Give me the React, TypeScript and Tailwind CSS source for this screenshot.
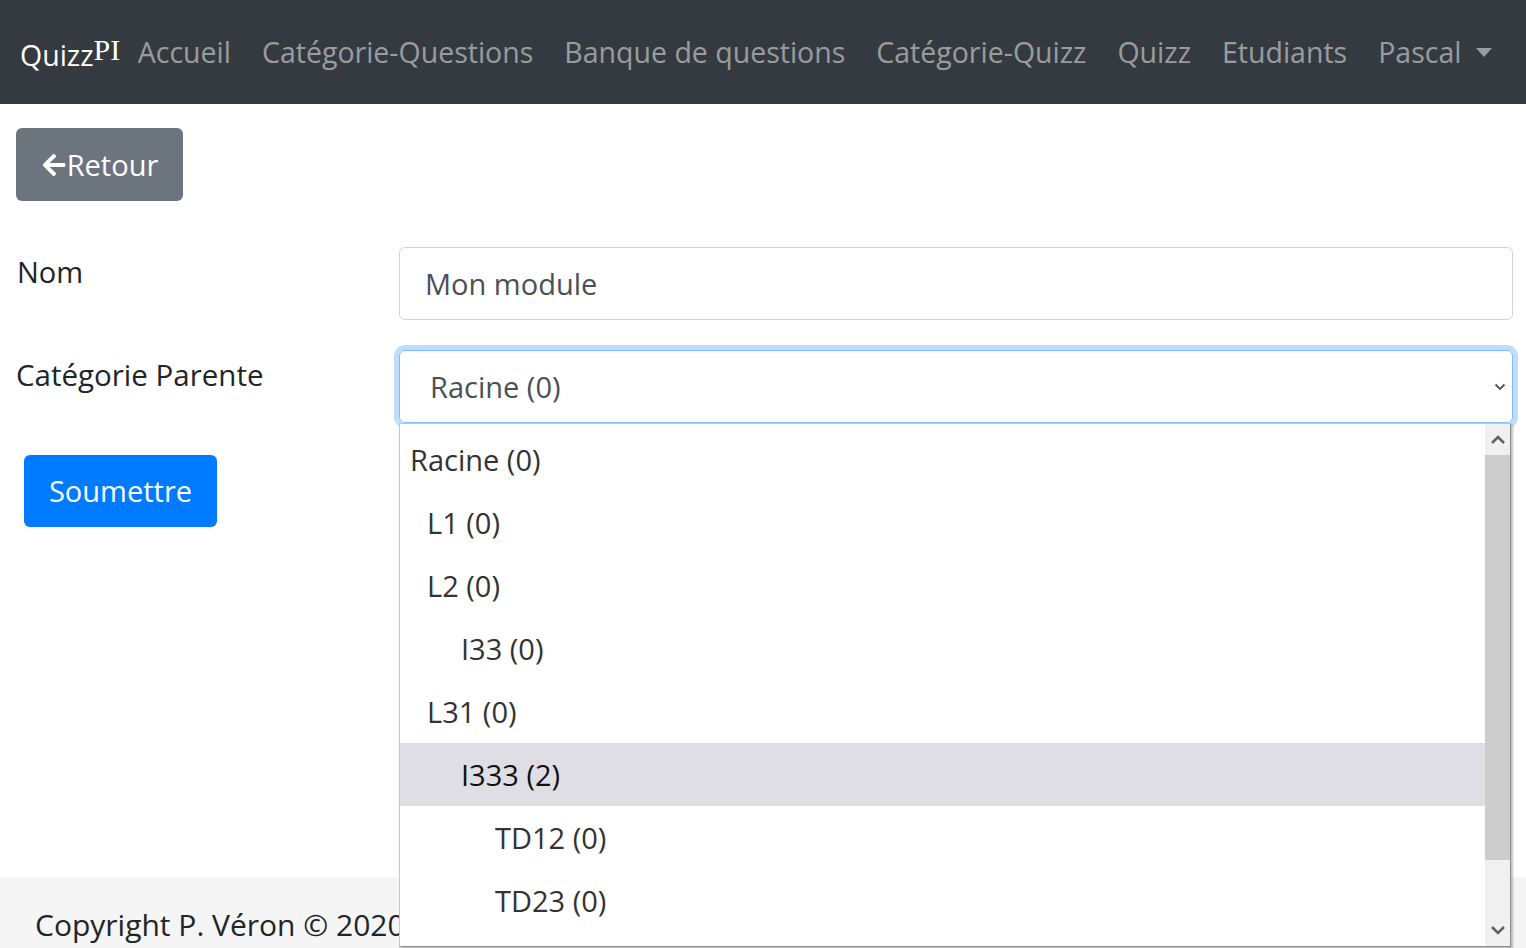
import { FaArrowLeft } from "react-icons/fa";

const navLinks = [
  "Accueil",
  "Catégorie-Questions",
  "Banque de questions",
  "Catégorie-Quizz",
  "Quizz",
  "Etudiants",
];

const options = [
  { label: "Racine (0)", indent: "pl-[10px]" },
  { label: "L1 (0)", indent: "pl-[27px]" },
  { label: "L2 (0)", indent: "pl-[27px]" },
  { label: "I33 (0)", indent: "pl-[61px]" },
  { label: "L31 (0)", indent: "pl-[27px]" },
  { label: "I333 (2)", indent: "pl-[61px]", active: true },
  { label: "TD12 (0)", indent: "pl-[95px]" },
  { label: "TD23 (0)", indent: "pl-[95px]" },
];

const Navbar = () => (
  <nav className="flex h-[104px] shrink-0 items-center whitespace-nowrap bg-[#343a40] px-[20px]">
    <a className="mr-[2px] flex shrink-0 items-start text-[28.5px] leading-none text-white">
      <span className="pt-[6px]">Quizz</span>
      <span className="font-['Liberation_Serif',serif] text-[30px] leading-none">PI</span>
    </a>
    <div className="flex shrink-0 items-center">
      {navLinks.map((link) => (
        <a key={link} className="shrink-0 px-[15.5px] text-[28.5px] text-white/50">
          {link}
        </a>
      ))}
      <a className="flex shrink-0 items-center gap-[15px] px-[15.5px] text-[28.5px] text-white/50">
        Pascal
        <span className="h-0 w-0 border-x-[8px] border-t-[9px] border-x-transparent border-t-white/50" />
      </a>
    </div>
  </nav>
);

const Dropdown = () => (
  <div className="absolute left-0 top-[73px] z-10 flex h-[524px] w-[1112px] border border-[#c5c5cb] border-r-[#8f8f94] border-b-[#8f8f94] bg-white shadow-[2px_2px_2px_rgba(0,0,0,0.25)]">
    <div className="flex-1 pt-[4px]">
      {options.map((o) => (
        <div
          key={o.label}
          className={`flex h-[63px] items-center text-[29px] ${o.indent} ${
            o.active ? "bg-[#dfdee4] text-[#111]" : "text-[#333]"
          }`}
        >
          {o.label}
        </div>
      ))}
    </div>
    <div className="flex w-[25px] flex-col bg-[#f0f0f0]">
      <div className="flex h-[31px] items-center justify-center">
        <svg width="14" height="9" viewBox="0 0 14 9">
          <path d="M1 8 L7 2 L13 8" fill="none" stroke="#606060" strokeWidth="2.5" />
        </svg>
      </div>
      <div className="h-[405px] bg-[#cdcdcd]" />
      <div className="flex-1" />
      <div className="flex h-[31px] items-center justify-center">
        <svg width="14" height="9" viewBox="0 0 14 9">
          <path d="M1 1 L7 7 L13 1" fill="none" stroke="#606060" strokeWidth="2.5" />
        </svg>
      </div>
    </div>
  </div>
);

export default function App() {
  return (
    <div className="flex h-screen flex-col overflow-hidden bg-white font-['Open_Sans',sans-serif]">
      <Navbar />
      <main className="flex-1 pl-[16px] pr-[13px] pt-[24px]">
        <button className="flex h-[73px] w-[167px] items-center justify-center rounded-[6px] bg-[#6c757d] text-[29px] text-white">
          <FaArrowLeft className="h-[26px] w-[26px]" />
          Retour
        </button>

        <div className="mt-[46px] flex items-start">
          <label className="w-[383px] pl-[1px] pt-[3px] text-[29px] text-[#212529]">Nom</label>
          <div className="flex h-[73px] flex-1 items-center rounded-[6px] border border-[#ced4da] px-[25px] text-[29px] text-[#495057]">
            Mon module
          </div>
        </div>

        <div className="mt-[30px] flex items-start">
          <label className="w-[383px] pt-[3px] text-[29.5px] text-[#212529]">Catégorie Parente</label>
          <div className="relative flex-1">
            <div className="flex h-[73px] items-center justify-between rounded-[6px] border border-[#80bdff] pl-[30px] pr-[6px] text-[29px] text-[#495057] ring-[5px] ring-[#007bff]/25">
              Racine (0)
              <svg width="12" height="8" viewBox="0 0 12 8">
                <path d="M1.5 1.5 L6 6 L10.5 1.5" fill="none" stroke="#495057" strokeWidth="1.8" />
              </svg>
            </div>
            <Dropdown />
          </div>
        </div>

        <button className="ml-[8px] mt-[32px] flex h-[72px] w-[193px] items-center justify-center rounded-[6px] bg-[#007bff] text-[29px] text-white">
          Soumettre
        </button>
      </main>
      <footer className="h-[71px] shrink-0 whitespace-nowrap bg-[#f5f5f5] px-[35px] pt-[33px] text-[30px] leading-none text-[#212529]">
        Copyright P. Véron © 2020
      </footer>
    </div>
  );
}
